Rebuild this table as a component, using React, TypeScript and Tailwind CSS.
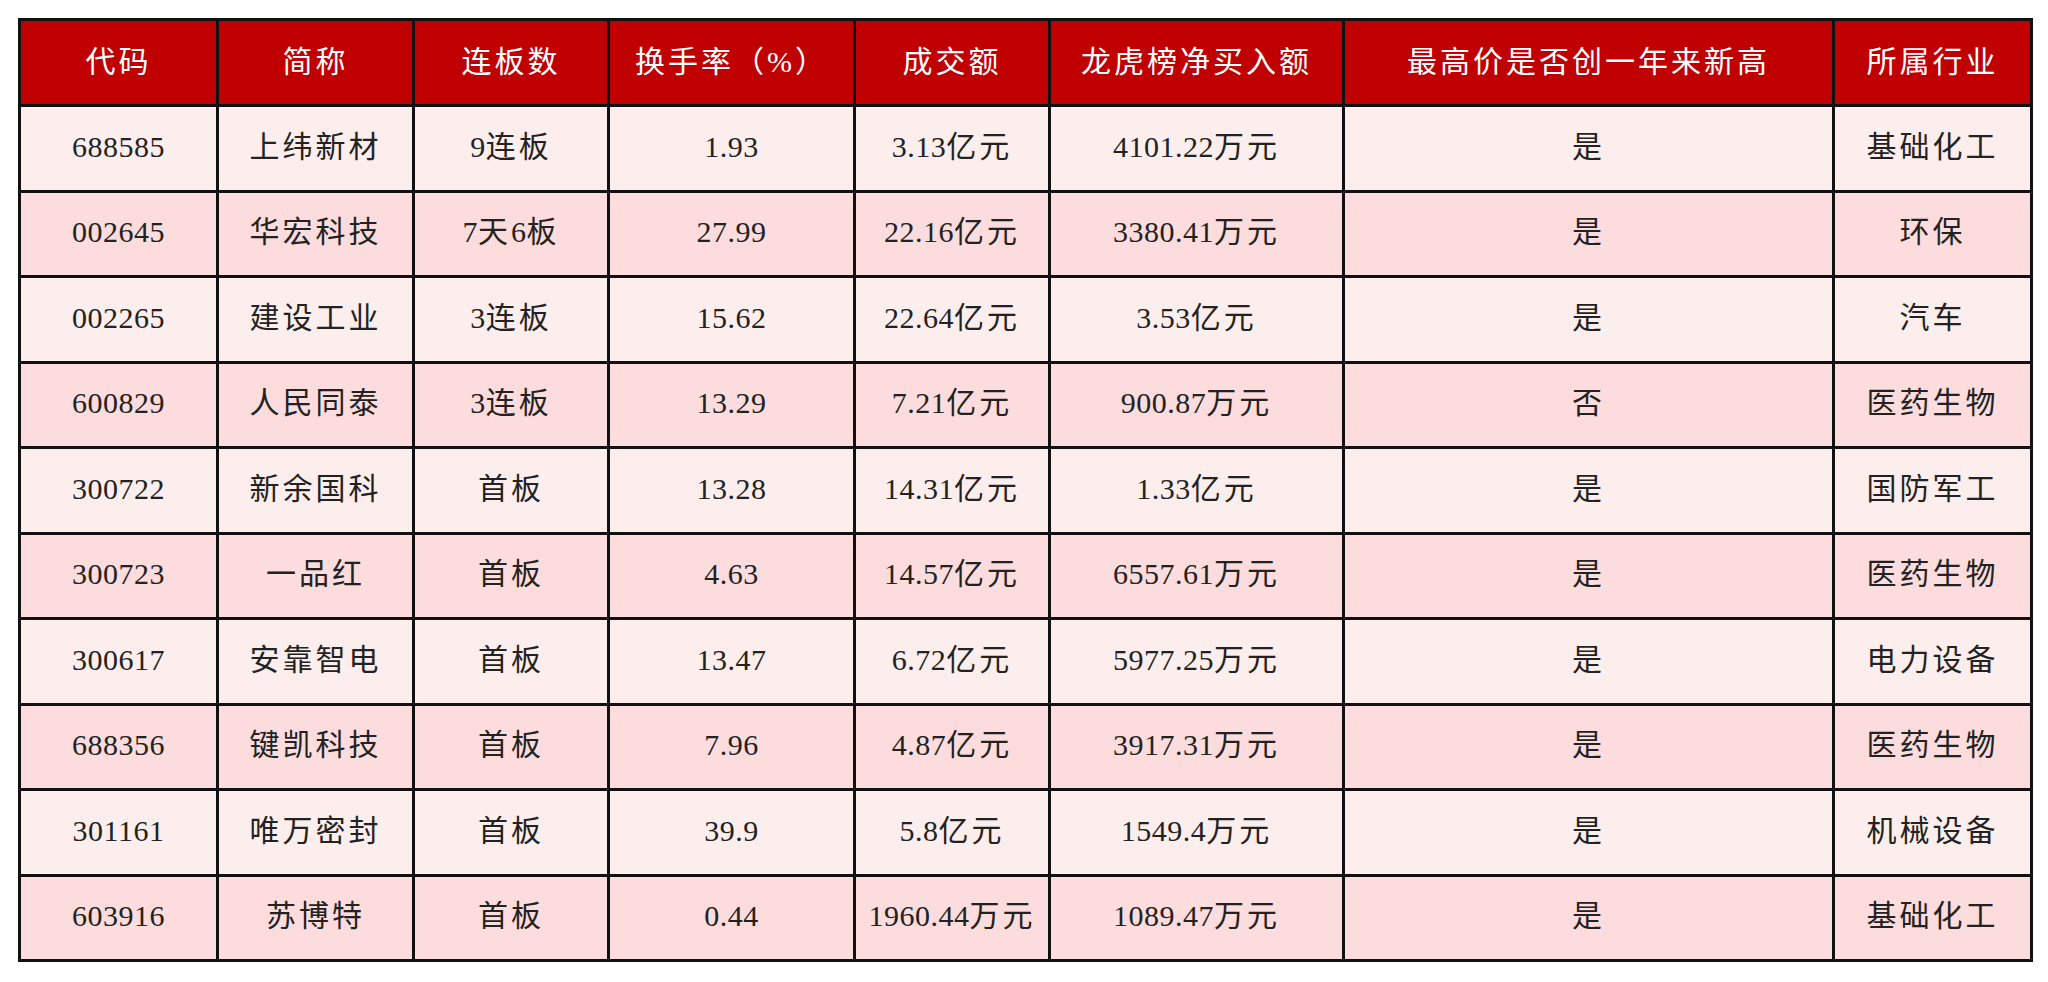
const headers = [
  "代码",
  "简称",
  "连板数",
  "换手率（%）",
  "成交额",
  "龙虎榜净买入额",
  "最高价是否创一年来新高",
  "所属行业",
];

const widths = [
  "w-[198px]",
  "w-[196px]",
  "w-[195px]",
  "w-[246px]",
  "w-[195px]",
  "w-[294px]",
  "w-[490px]",
  "w-[198px]",
];

const rows = [
  ["688585", "上纬新材", "9连板", "1.93", "3.13亿元", "4101.22万元", "是", "基础化工"],
  ["002645", "华宏科技", "7天6板", "27.99", "22.16亿元", "3380.41万元", "是", "环保"],
  ["002265", "建设工业", "3连板", "15.62", "22.64亿元", "3.53亿元", "是", "汽车"],
  ["600829", "人民同泰", "3连板", "13.29", "7.21亿元", "900.87万元", "否", "医药生物"],
  ["300722", "新余国科", "首板", "13.28", "14.31亿元", "1.33亿元", "是", "国防军工"],
  ["300723", "一品红", "首板", "4.63", "14.57亿元", "6557.61万元", "是", "医药生物"],
  ["300617", "安靠智电", "首板", "13.47", "6.72亿元", "5977.25万元", "是", "电力设备"],
  ["688356", "键凯科技", "首板", "7.96", "4.87亿元", "3917.31万元", "是", "医药生物"],
  ["301161", "唯万密封", "首板", "39.9", "5.8亿元", "1549.4万元", "是", "机械设备"],
  ["603916", "苏博特", "首板", "0.44", "1960.44万元", "1089.47万元", "是", "基础化工"],
];

// digits stay tight, chinese characters get a little air between them
function Cell({ text }: { text: string }) {
  const parts = text.match(/[0-9.]+|[^0-9.]+/g) || [];
  return (
    <>
      {parts.map((p, i) =>
        /[0-9.]/.test(p) ? (
          <span key={i} className="tracking-[0.5px]">
            {p}
          </span>
        ) : (
          <span key={i} className="tracking-[3px]">
            {p}
          </span>
        )
      )}
    </>
  );
}

export default function App() {
  return (
    <div className="min-h-screen bg-white pt-[18px] pl-[18px] font-['Liberation_Serif','Noto_Sans_CJK_SC',serif]">
      <table className="table-fixed border-collapse border-[3px] border-[#111] w-[2012px]">
        <thead>
          <tr className="h-[86px] bg-[#c00000] text-white text-[30px]">
            {headers.map((h, i) => (
              <th
                key={h}
                className={`${widths[i]} border-[3px] border-[#111] text-center font-normal tracking-[3px] pb-[2px]`}
              >
                {h}
              </th>
            ))}
          </tr>
        </thead>
        <tbody>
          {rows.map((row, r) => (
            <tr
              key={row[0]}
              className={`h-[85.5px] text-[#222] text-[30px] ${r % 2 === 0 ? "bg-[#fdeeee]" : "bg-[#fcdcdd]"}`}
            >
              {row.map((cell, c) => (
                <td
                  key={c}
                  className="border-[3px] border-[#111] text-center pb-[4px]"
                >
                  <Cell text={cell} />
                </td>
              ))}
            </tr>
          ))}
        </tbody>
      </table>
    </div>
  );
}
